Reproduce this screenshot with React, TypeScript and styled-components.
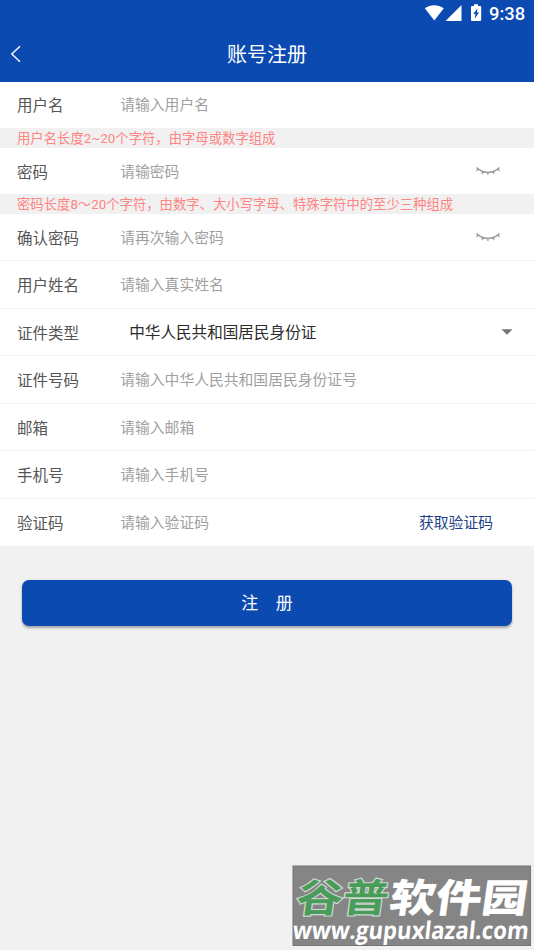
import React from "react";
import styled, { createGlobalStyle } from "styled-components";

const GlobalStyle = createGlobalStyle`
  * { box-sizing: border-box; }
  body {
    margin: 0;
    background: #f1f1f1;
    font-family: Roboto, "Noto Sans CJK SC", sans-serif;
  }
`;

const Screen = styled.div`
  position: relative;
  display: flex;
  flex-direction: column;
  width: 534px;
  height: 950px;
  overflow: hidden;
  background: #f1f1f1;
`;

const Header = styled.header`
  height: 81.6px;
  flex: none;
  background: #0b4bb1;
  color: #fff;
`;

const StatusBar = styled.div`
  display: flex;
  justify-content: flex-end;
  height: 27px;
  padding-right: 9px;
`;

const StatusIcons = styled.svg`
  width: 60px;
  height: 27px;
  fill: #fff;
`;

const Clock = styled.span`
  width: 36px;
  margin-left: 5px;
  font-size: 18.4px;
  line-height: 28px;
  font-weight: 500;
  white-space: nowrap;
`;

const TitleBar = styled.div`
  display: grid;
  grid-template-columns: 60px 1fr 60px;
  align-items: center;
  height: 54px;
`;

const BackIcon = styled.svg`
  width: 12px;
  height: 18px;
  margin-left: 10px;
  fill: none;
  stroke: #fff;
  stroke-width: 1.4;
`;

const Title = styled.h1`
  margin: 0;
  padding-top: 2px;
  font-size: 20px;
  line-height: 28px;
  font-weight: 400;
  text-align: center;
`;

const Row = styled.div<{ $divided?: boolean }>`
  display: flex;
  align-items: center;
  flex: none;
  height: ${(p) => (p.$divided ? "47.5px" : "46.6px")};
  padding: 1px 17px 0;
  background: #fff;
  border-bottom: ${(p) => (p.$divided ? "1px solid #f2f2f2" : "none")};
`;

const Label = styled.span`
  width: 103.2px;
  padding-top: 2px;
  font-size: 15.5px;
  line-height: 22px;
  color: #555;
`;

const Placeholder = styled.span`
  flex: 1;
  font-size: 14.8px;
  line-height: 22px;
  color: #a0a0a0;
`;

const Selected = styled.span`
  flex: 1;
  padding: 1px 0 0 9px;
  font-size: 15.6px;
  line-height: 22px;
  color: #2c2c2c;
`;

const Hint = styled.div`
  flex: none;
  height: 19.6px;
  padding-left: 17px;
  font-size: 13.35px;
  line-height: 21.5px;
  color: #ff8583;
  white-space: nowrap;
`;

const EyeIcon = styled.svg`
  width: 26px;
  height: 12px;
  margin: 0 16px 2px 0;
  fill: none;
  stroke: #929292;
  stroke-width: 1.2;
`;

const Caret = styled.svg`
  width: 12px;
  height: 6px;
  margin: 0 4px 1px 0;
  fill: #757575;
`;

const CodeButton = styled.button`
  margin-right: 24px;
  padding: 0;
  border: 0;
  background: none;
  font-family: inherit;
  font-size: 14.8px;
  line-height: 22px;
  color: #1c3f88;
`;

const SubmitButton = styled.button`
  flex: none;
  height: 46px;
  margin: 34px 22px 0;
  padding: 1px 0 0;
  border: 0;
  border-radius: 7px;
  background: #0b4bb1;
  box-shadow: 0 1.5px 2.5px rgba(0, 0, 0, 0.32);
  color: #fff;
  font-family: inherit;
  font-size: 17px;
  line-height: 24px;
  word-spacing: 13.5px;
`;

const Watermark = styled.svg`
  position: absolute;
  left: 292px;
  top: 865px;
  width: 242px;
  height: 85px;
  overflow: visible;
`;

const BrandText = styled.text<{ $outlined?: boolean }>`
  font-family: "Noto Sans CJK SC", sans-serif;
  font-weight: ${(p) => (p.$outlined ? 700 : 900)};
  font-size: 42px;
  fill: ${(p) => (p.$outlined ? "#4a9c5b" : "#fff")};
  stroke: ${(p) => (p.$outlined ? "#d2d8d2" : "none")};
  stroke-width: 2.4px;
  paint-order: stroke;
`;

const SiteText = styled.text`
  font-family: "Open Sans", sans-serif;
  font-weight: 700;
  font-size: 24.5px;
  fill: #fff;
`;

const ClosedEye = () => (
  <EyeIcon viewBox="0 0 26 12">
    <path d="M1.5 2.5C5 6 8.5 7.3 13 7.3S21 6 24.5 2.5M3 3.8 1.7 6M7.8 6.4 7 9M12.9 7.3V10M18.2 6.4 19 9M23 3.8 24.3 6" />
  </EyeIcon>
);

type FieldProps = {
  label: string;
  placeholder: string;
  divided?: boolean;
  children?: React.ReactNode;
};

const Field = ({ label, placeholder, divided, children }: FieldProps) => (
  <Row $divided={divided}>
    <Label>{label}</Label>
    <Placeholder>{placeholder}</Placeholder>
    {children}
  </Row>
);

export default function App() {
  return (
    <>
      <GlobalStyle />
      <Screen>
        <Header>
          <StatusBar>
            <StatusIcons viewBox="424 0 60 27">
              <path d="M424.8 8.2C430.6 4.2 437.8 4.2 443.8 8.2L434.3 20.6Z" />
              <path d="M461.5 5V21H445.5Z" />
              <path
                fillRule="evenodd"
                d="M474 4.3H478V6H480.2Q481.2 6 481.2 7V20Q481.2 21 480.2 21H472Q471 21 471 20V7Q471 6 472 6H474ZM477.5 8.3 473.3 14H475.5L474.7 18.8 479 12.6H476.8Z"
              />
            </StatusIcons>
            <Clock>9:38</Clock>
          </StatusBar>
          <TitleBar>
            <BackIcon viewBox="0 0 12 18">
              <path d="M10 1.3 1.8 9 10 16.7" />
            </BackIcon>
            <Title>账号注册</Title>
          </TitleBar>
        </Header>

        <Field label="用户名" placeholder="请输入用户名" />
        <Hint>用户名长度2~20个字符，由字母或数字组成</Hint>
        <Field label="密码" placeholder="请输密码">
          <ClosedEye />
        </Field>
        <Hint>密码长度8～20个字符，由数字、大小写字母、特殊字符中的至少三种组成</Hint>
        <Field label="确认密码" placeholder="请再次输入密码" divided>
          <ClosedEye />
        </Field>
        <Field label="用户姓名" placeholder="请输入真实姓名" divided />
        <Row $divided>
          <Label>证件类型</Label>
          <Selected>中华人民共和国居民身份证</Selected>
          <Caret viewBox="0 0 12 6">
            <path d="M0.5 0.3H11.5L6 5.8Z" />
          </Caret>
        </Row>
        <Field label="证件号码" placeholder="请输入中华人民共和国居民身份证号" divided />
        <Field label="邮箱" placeholder="请输入邮箱" divided />
        <Field label="手机号" placeholder="请输入手机号" divided />
        <Field label="验证码" placeholder="请输入验证码">
          <CodeButton>获取验证码</CodeButton>
        </Field>

        <SubmitButton>注 册</SubmitButton>

        <Watermark viewBox="0 0 242 85">
          <rect x="1" y="1" width="237.5" height="79.5" fill="#858585" stroke="#747474" />
          <g transform="translate(3 46.5) skewX(-8) scale(1 .93)">
            <BrandText $outlined textLength="92" lengthAdjust="spacingAndGlyphs">
              谷普
            </BrandText>
            <BrandText x="93" textLength="138" lengthAdjust="spacingAndGlyphs">
              软件园
            </BrandText>
          </g>
          <g transform="translate(0 74) skewX(-6) scale(.905 1)">
            <SiteText>www.gupuxlazal.com</SiteText>
          </g>
        </Watermark>
      </Screen>
    </>
  );
}
